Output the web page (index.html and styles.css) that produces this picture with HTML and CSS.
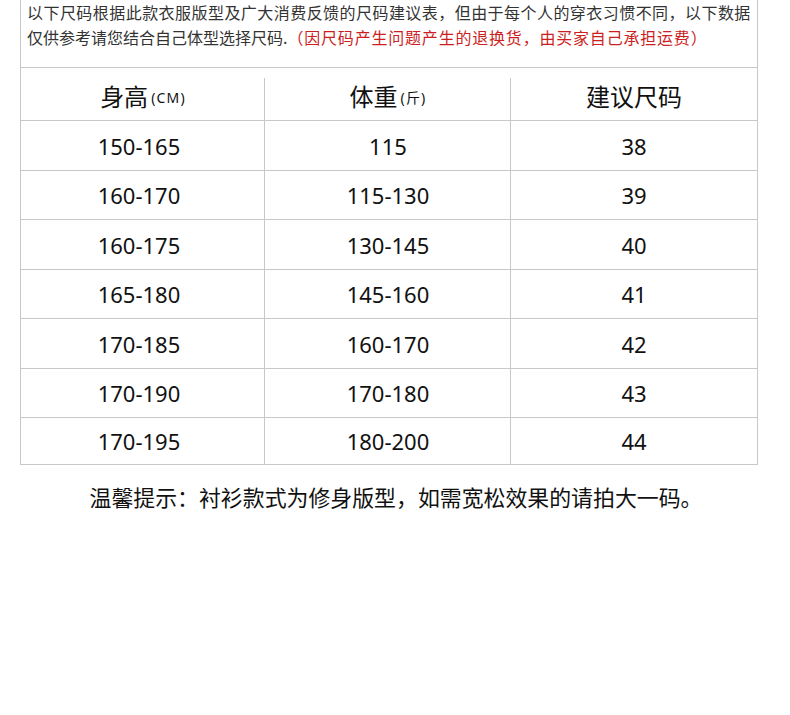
FILE: index.html
```html
<!DOCTYPE html>
<html lang="zh-CN">
<head>
<meta charset="utf-8">
<title>尺码建议表</title>
<link rel="stylesheet" href="styles.css">
</head>
<body>
<div class="chart">
  <div class="intro">
    <p class="line first">以下尺码根据此款衣服版型及广大消费反馈的尺码建议表，但由于每个人的穿衣习惯不同，以下数据</p>
    <p class="line">仅供参考请您结合自己体型选择尺码.<span class="warn">（因尺码产生问题产生的退换货，由买家自己承担运费）</span></p>
  </div>
  <div class="head-row">
    <div class="hcell">身高<small>(CM)</small></div>
    <div class="hcell div">体重<small>(斤)</small></div>
    <div class="hcell div">建议尺码</div>
  </div>
  <div class="row r50"><div class="cell c1">150-165</div><div class="cell div">115</div><div class="cell div">38</div></div>
  <div class="row r49"><div class="cell c1">160-170</div><div class="cell div">115-130</div><div class="cell div">39</div></div>
  <div class="row r50"><div class="cell c1">160-175</div><div class="cell div">130-145</div><div class="cell div">40</div></div>
  <div class="row r49"><div class="cell c1">165-180</div><div class="cell div">145-160</div><div class="cell div">41</div></div>
  <div class="row r50"><div class="cell c1">170-185</div><div class="cell div">160-170</div><div class="cell div">42</div></div>
  <div class="row r49"><div class="cell c1">170-190</div><div class="cell div">170-180</div><div class="cell div">43</div></div>
  <div class="row r46"><div class="cell c1">170-195</div><div class="cell div">180-200</div><div class="cell div">44</div></div>
</div>
<p class="tip">温馨提示：衬衫款式为修身版型，如需宽松效果的请拍大一码。</p>
</body>
</html>
```
FILE: styles.css
```css
html, body {
  margin: 0;
  padding: 0;
  background: #fff;
}
body {
  font-family: "Noto Sans", "Noto Sans CJK SC", sans-serif;
  color: #111;
}
.chart {
  margin-left: 20px;
  width: 736px;
  border-left: 1px solid #c8c8c8;
  border-right: 1px solid #c8c8c8;
  border-bottom: 1px solid #c8c8c8;
}
.intro {
  height: 68px;
  box-sizing: border-box;
  padding: 0 0 0 6px;
  border-bottom: 1px solid #c8c8c8;
}
.line {
  margin: 0;
  font-family: "Noto Sans CJK SC", sans-serif;
  font-size: 16px;
  letter-spacing: 0;
  line-height: 25px;
  color: #333;
  white-space: nowrap;
}
.line.first {
  letter-spacing: 0.45px;
}
.warn {
  color: #cc1f1f;
  letter-spacing: 0.8px;
}
.head-row {
  display: grid;
  grid-template-columns: 244px 246px 246px;
  padding-top: 10px;
  border-bottom: 1px solid #c8c8c8;
}
.hcell {
  height: 42px;
  box-sizing: border-box;
  padding-bottom: 8px;
  display: flex;
  align-items: center;
  justify-content: center;
  font-family: "Noto Sans CJK SC", sans-serif;
  font-size: 24px;
  color: #111;
}
.hcell small {
  font-family: "Noto Sans", sans-serif;
  font-size: 14px;
  letter-spacing: 1.2px;
  margin-left: 3px;
  margin-top: 4px;
}
.div {
  border-left: 1px solid #c8c8c8;
  margin-left: -1px;
}
.row {
  display: grid;
  grid-template-columns: 244px 246px 246px;
  box-sizing: border-box;
  border-bottom: 1px solid #c8c8c8;
}
.row:last-child {
  border-bottom: none;
}
.r50 { height: 50px; }
.r49 { height: 49px; }
.r46 { height: 46px; }
.cell {
  display: flex;
  align-items: center;
  justify-content: center;
  font-size: 22px;
  color: #111;
}
.c1 {
  padding-right: 8px;
}
.tip {
  margin: 17px 0 0 0;
  text-align: center;
  padding-left: 2px;
  font-family: "Noto Sans CJK SC", sans-serif;
  font-size: 21.9px;
  line-height: 30px;
  color: #111;
}
```
